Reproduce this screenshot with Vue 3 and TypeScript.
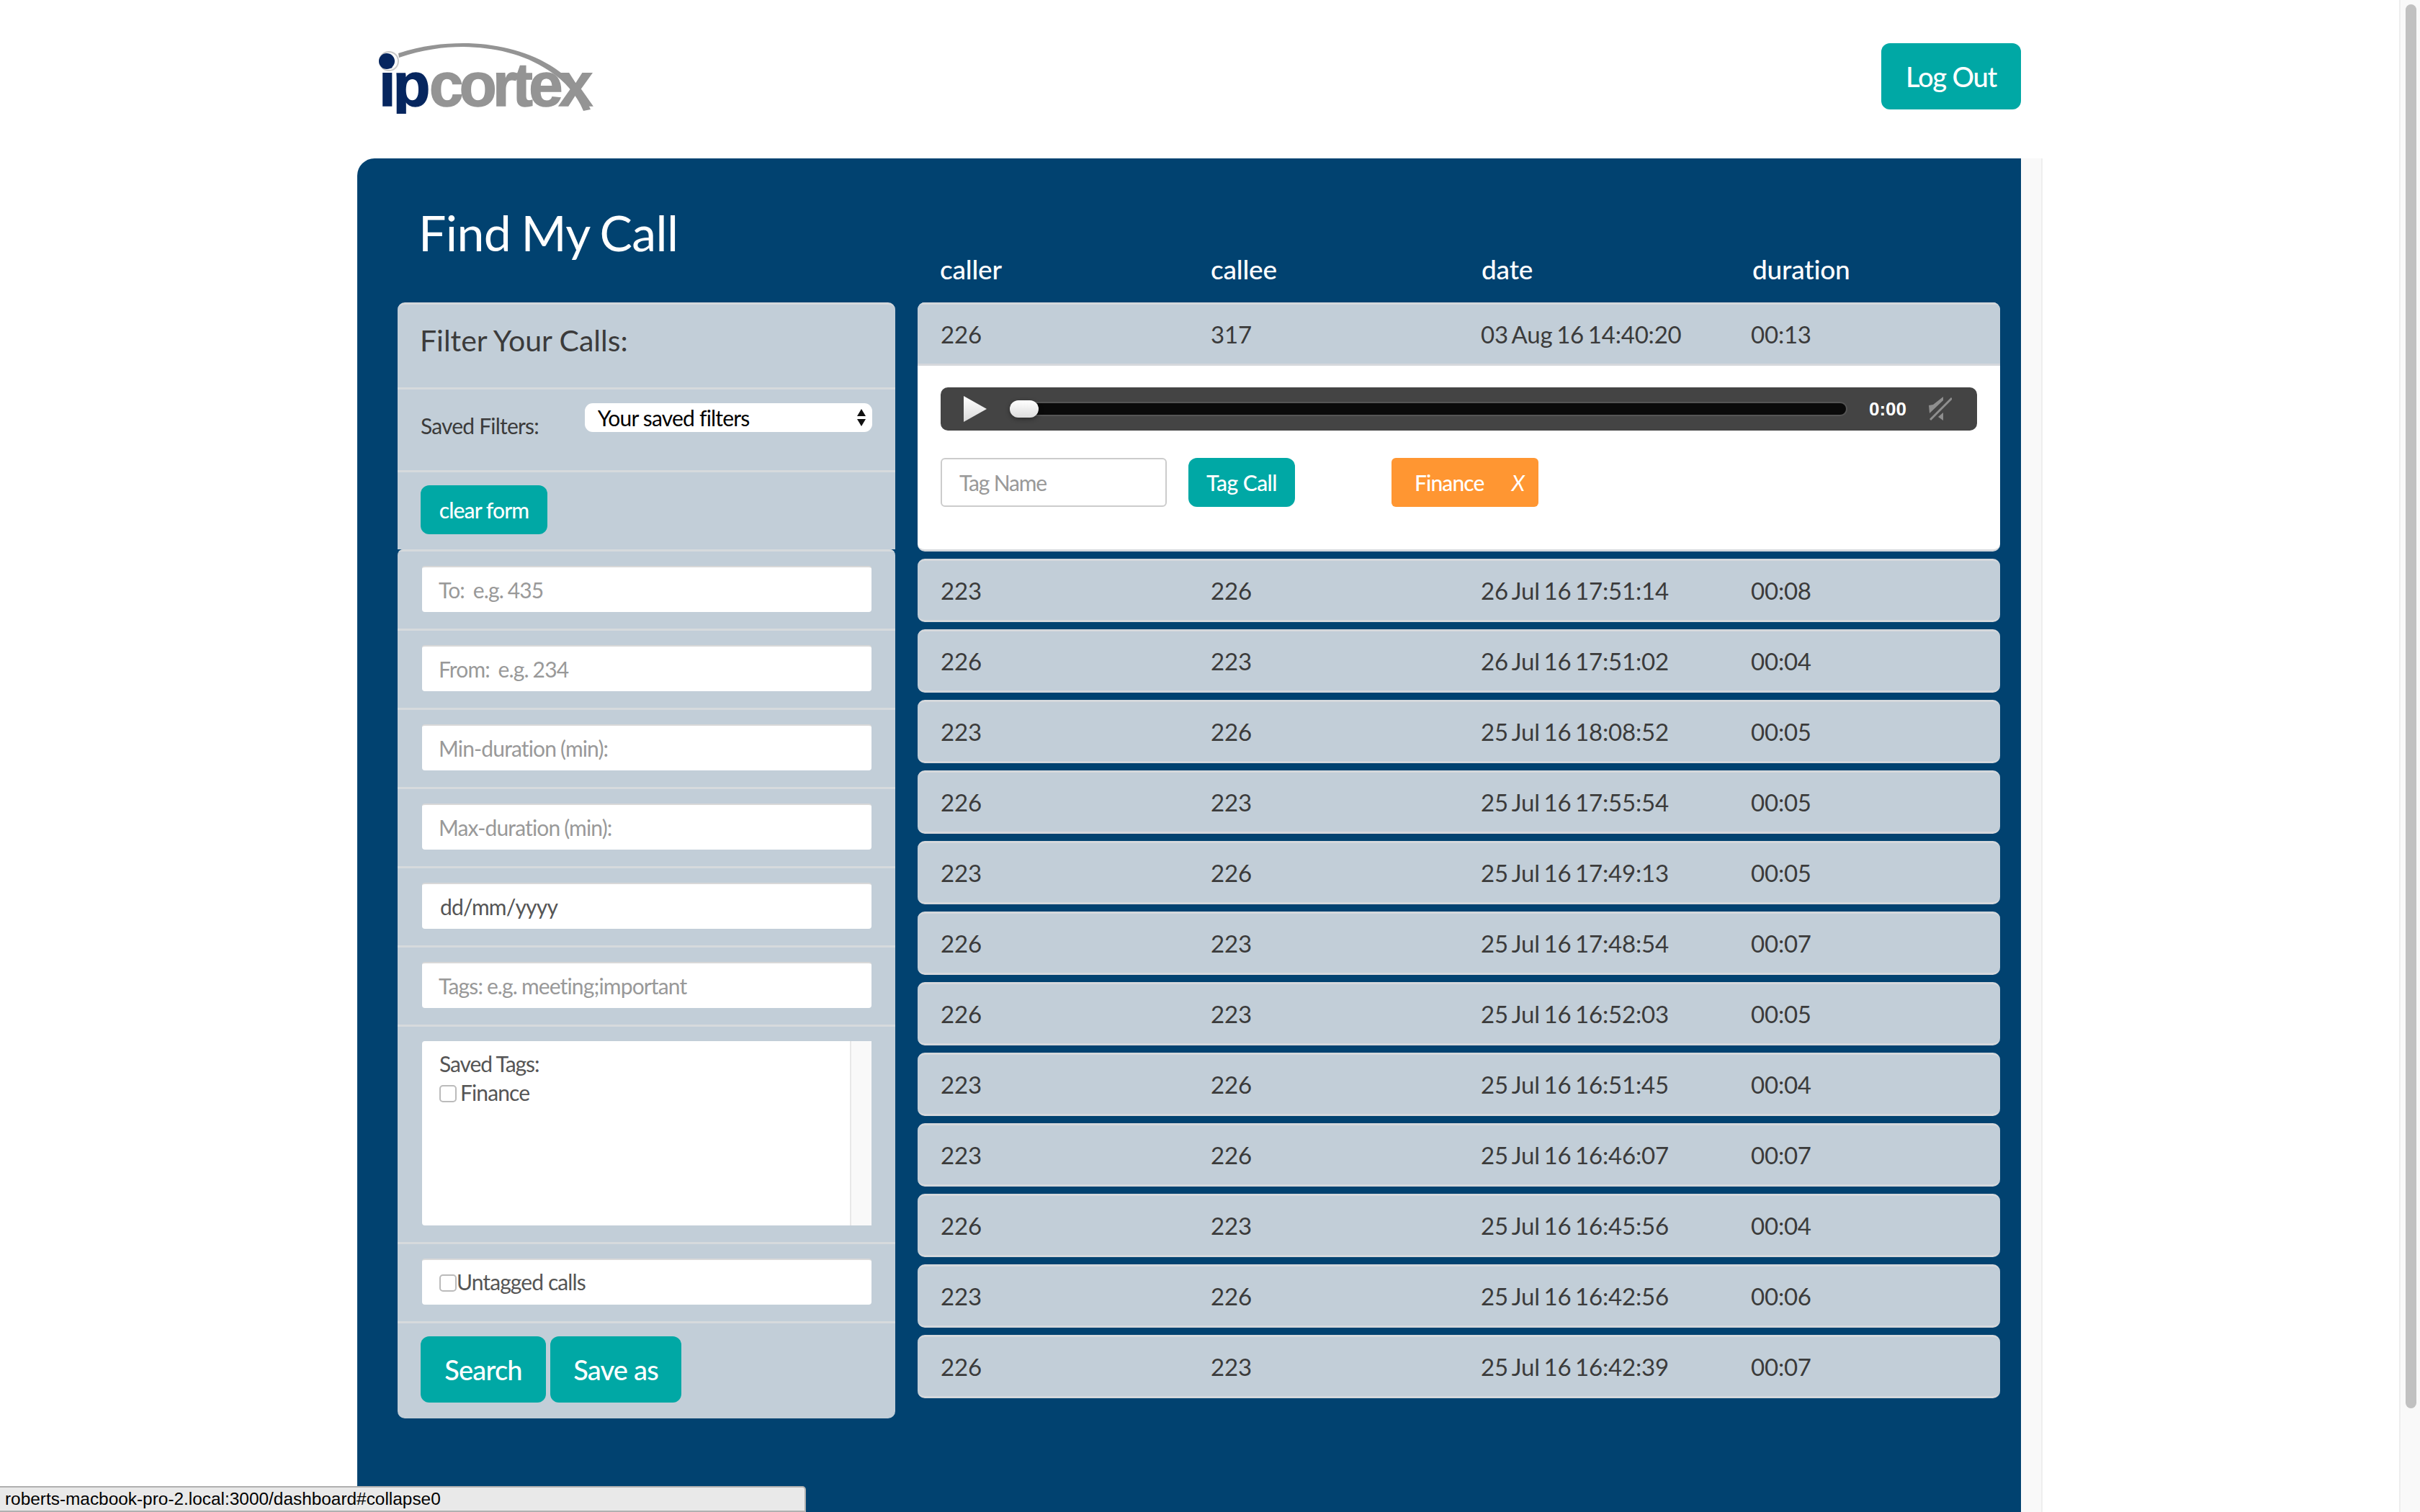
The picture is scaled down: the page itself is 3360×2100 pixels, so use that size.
<template>
  <div class="page">
    <div class="content">
      <header class="topbar">
        <svg class="logo" viewBox="0 0 294 100" role="img" aria-label="ipcortex logo">
          <defs>
            <clipPath id="logoClip"><rect x="0" y="0" width="300" height="98" /></clipPath>
          </defs>
          <path d="M27 14 C60 3 90 0 117 0 C160 0 205 10 240 32 C265 48 285 70 294 92 L284 94 C275 72 258 52 236 38 C200 14 160 6 117 5 C90 5 60 9 28 20 Z" fill="#949494" />
          <circle cx="14" cy="25" r="13" fill="none" stroke="#c9c9c9" stroke-width="2" />
          <g clip-path="url(#logoClip)">
            <text x="0" y="87" class="logo-ip">ip</text>
          </g>
          <circle cx="11" cy="25" r="11" fill="#06265f" />
          <text x="70" y="87" class="logo-rest">cortex</text>
        </svg>
        <button class="btn btn-logout" type="button">Log Out</button>
      </header>

      <div class="panel-wrap">
        <main class="panel">
          <h1 class="title">Find My Call</h1>
          <div class="columns">
            <aside class="filters">
              <div class="filter-group group-top">
                <div class="filter-row filter-head">Filter Your Calls:</div>
                <div class="filter-row filter-saved">
                  <label class="saved-label">Saved Filters:</label>
                  <div class="select-wrap">
                    <select class="saved-select">
                      <option>Your saved filters</option>
                    </select>
                    <svg class="select-arrows" viewBox="0 0 12 24">
                      <path d="M6 0 L12 10 H0 Z M0 14 H12 L6 24 Z" fill="#111" />
                    </svg>
                  </div>
                </div>
                <div class="filter-row filter-clear">
                  <button class="btn btn-clear" type="button">clear form</button>
                </div>
              </div>
              <div class="filter-group group-bottom">
                <div v-for="field in fields" :key="field" class="filter-row filter-field">
                  <input class="field" type="text" :placeholder="field" />
                </div>
                <div class="filter-row filter-field">
                  <input class="field field-date" type="text" value="dd/mm/yyyy" />
                </div>
                <div class="filter-row filter-field">
                  <input class="field" type="text" placeholder="Tags: e.g. meeting;important" />
                </div>
                <div class="filter-row filter-tags">
                  <div class="tags-box">
                    <div class="tags-list">
                      <div class="tags-title">Saved Tags:</div>
                      <label class="check-line check-finance"><input type="checkbox" class="check" />Finance</label>
                    </div>
                    <div class="tags-scroll"></div>
                  </div>
                </div>
                <div class="filter-row filter-untagged">
                  <label class="check-line untagged"><input type="checkbox" class="check" />Untagged calls</label>
                </div>
                <div class="filter-row filter-actions">
                  <button class="btn btn-big btn-search" type="button">Search</button>
                  <button class="btn btn-big btn-save" type="button">Save as</button>
                </div>
              </div>
            </aside>

            <section class="calls">
              <div class="calls-head">
                <span>caller</span>
                <span>callee</span>
                <span>date</span>
                <span>duration</span>
              </div>
              <div class="call-card">
                <div class="call-row open">
                  <span>226</span><span>317</span><span>03 Aug 16 14:40:20</span><span>00:13</span>
                </div>
                <div class="call-body">
                  <div class="player">
                    <svg class="play" viewBox="0 0 32 36">
                      <defs>
                        <linearGradient id="playFill" x1="0" y1="0" x2="0" y2="1">
                          <stop offset="0" stop-color="#fff" />
                          <stop offset="1" stop-color="#d9d9d9" />
                        </linearGradient>
                      </defs>
                      <path d="M0 0 L32 18 L0 36 Z" fill="url(#playFill)" />
                    </svg>
                    <div class="track"><div class="thumb"></div></div>
                    <span class="time">0:00</span>
                    <svg class="mute" viewBox="0 0 32 34">
                      <path d="M0 12 L6 11 L20 0 V5 L1 23 Z" fill="#8e8e8e" />
                      <path d="M2 32 L32 2" stroke="#8e8e8e" stroke-width="3" fill="none" />
                      <path d="M13 28 L20 22 V33 Z" fill="#8e8e8e" />
                    </svg>
                  </div>
                  <div class="tag-line">
                    <input class="tag-input" type="text" placeholder="Tag Name" />
                    <button class="btn btn-tag" type="button">Tag Call</button>
                    <span class="tag-chip">Finance<em class="tag-x">X</em></span>
                  </div>
                </div>
              </div>
              <div v-for="(call, i) in calls" :key="i" class="call-row">
                <span>{{ call[0] }}</span><span>{{ call[1] }}</span><span>{{ call[2] }}</span><span>{{ call[3] }}</span>
              </div>
            </section>
          </div>
        </main>
        <div class="panel-strip"></div>
      </div>
    </div>
    <div class="page-scroll"><div class="page-thumb"></div></div>
    <div class="status">roberts-macbook-pro-2.local:3000/dashboard#collapse0</div>
  </div>
</template>

<script setup lang="ts">
const fields: string[] = [
  'To:  e.g. 435',
  'From:  e.g. 234',
  'Min-duration (min):',
  'Max-duration (min):',
]

const calls: string[][] = [
  ['223', '226', '26 Jul 16 17:51:14', '00:08'],
  ['226', '223', '26 Jul 16 17:51:02', '00:04'],
  ['223', '226', '25 Jul 16 18:08:52', '00:05'],
  ['226', '223', '25 Jul 16 17:55:54', '00:05'],
  ['223', '226', '25 Jul 16 17:49:13', '00:05'],
  ['226', '223', '25 Jul 16 17:48:54', '00:07'],
  ['226', '223', '25 Jul 16 16:52:03', '00:05'],
  ['223', '226', '25 Jul 16 16:51:45', '00:04'],
  ['223', '226', '25 Jul 16 16:46:07', '00:07'],
  ['226', '223', '25 Jul 16 16:45:56', '00:04'],
  ['223', '226', '25 Jul 16 16:42:56', '00:06'],
  ['226', '223', '25 Jul 16 16:42:39', '00:07'],
]
</script>

<style>
html,
body {
  margin: 0;
  background: #fff;
  overflow: hidden;
}
</style>

<style scoped>
.page {
  position: relative;
  display: flex;
  height: 2100px;
  overflow: hidden;
  font-family: Lato, "Open Sans", sans-serif;
  color: #333;
}

.content {
  flex: 1;
  padding-left: 496px;
}

.topbar {
  display: flex;
  justify-content: space-between;
  width: 2310px;
  height: 220px;
  padding: 60px 0 0 30px;
  box-sizing: border-box;
  align-items: flex-start;
}

.logo {
  width: 294px;
  height: 100px;
  overflow: visible;
}

.logo-ip {
  font: bold 85px "Liberation Sans", sans-serif;
  letter-spacing: -4px;
  fill: #06265f;
  stroke: #06265f;
  stroke-width: 1.5px;
}

.logo-rest {
  font: bold 85px "Liberation Sans", sans-serif;
  letter-spacing: -5.6px;
  fill: #949494;
  stroke: #949494;
  stroke-width: 1.5px;
}

.btn {
  border: 0;
  background: #00a8a5;
  color: #fff;
  font-family: Lato, sans-serif;
  font-weight: 500;
  border-radius: 12px;
  padding: 0;
}

.btn-logout {
  width: 194px;
  height: 92px;
  font-size: 38px;
  letter-spacing: -1.2px;
}

.panel-wrap {
  display: flex;
  width: 2340px;
}

.panel {
  width: 2310px;
  height: 1880px;
  box-sizing: border-box;
  padding: 0 29px 0 56px;
  background: #014270;
  border-radius: 24px 0 0 0;
}

.panel-strip {
  width: 29px;
  background: #f9f9f9;
  border-right: 2px solid #eee;
}

.title {
  margin: 0;
  height: 200px;
  padding: 60px 0 0 29px;
  box-sizing: border-box;
  color: #fff;
  font-size: 68px;
  font-weight: 400;
  line-height: 86px;
  letter-spacing: -0.6px;
  word-spacing: -2.5px;
}

.columns {
  display: flex;
  gap: 31px;
  align-items: flex-start;
}

.filters {
  width: 691px;
  flex: none;
}

.filter-group {
  background: #c2ced8;
  overflow: hidden;
}

.group-top {
  border-radius: 10px 10px 0 0;
  border-top: 3px solid #d5d8dc;
}

.group-bottom {
  border-radius: 8px 8px 10px 10px;
}

.filter-row {
  box-sizing: border-box;
  padding: 0 32px;
  border-top: 3px solid #d6dadd;
}

.group-top .filter-row:first-child {
  border-top: 0;
}

.filter-head {
  height: 115px;
  padding-top: 24px;
  font-size: 41px;
  line-height: 52px;
  color: #3b3b3b;
  padding-left: 31px;
}

.filter-saved {
  height: 115px;
  display: flex;
  padding-top: 19px;
  align-items: flex-start;
}

.saved-label {
  width: 228px;
  padding-top: 11px;
  font-size: 30px;
  line-height: 40px;
  color: #3b3b3b;
  letter-spacing: -0.8px;
}

.select-wrap {
  position: relative;
  width: 400px;
  height: 40px;
}

.saved-select {
  appearance: none;
  width: 100%;
  height: 40px;
  border: 0;
  border-radius: 11px;
  padding: 0 0 0 18px;
  background: #fff;
  font-family: Lato, sans-serif;
  font-size: 30px;
  letter-spacing: -0.8px;
  color: #000;
}

.select-arrows {
  position: absolute;
  right: 9px;
  top: 8px;
  width: 12px;
  height: 24px;
}

.filter-clear {
  height: 110px;
  padding-top: 18px;
}

.btn-clear {
  width: 176px;
  height: 68px;
  font-size: 30px;
  letter-spacing: -0.9px;
}

.filter-field {
  height: 110px;
  padding-top: 20px;
  padding-left: 34px;
}

.field {
  display: block;
  width: 624px;
  height: 64px;
  box-sizing: border-box;
  border: 0;
  border-top: 2px solid #d8d8d8;
  border-radius: 4px;
  padding: 0 24px 0 23px;
  background: #fff;
  font-family: Lato, sans-serif;
  font-size: 30px;
  letter-spacing: -0.85px;
  word-spacing: -1px;
  color: #555;
  outline: none;
}

.field-date {
  padding-left: 25px;
  letter-spacing: -0.8px;
}

.field::placeholder {
  color: #999;
  opacity: 1;
  white-space: pre;
}

.filter-tags {
  height: 302px;
  padding-top: 20px;
  padding-left: 34px;
}

.tags-box {
  display: flex;
  width: 624px;
  height: 256px;
  border-radius: 4px 0 0 4px;
  background: #fff;
  overflow: hidden;
}

.tags-list {
  flex: 1;
  padding: 11px 24px;
  font-size: 30px;
  line-height: 40px;
  color: #555;
  letter-spacing: -1.1px;
}

.tags-scroll {
  width: 28px;
  background: #f9f9f9;
  border-left: 2px solid #e8e8e8;
}

.check-line {
  display: flex;
  align-items: center;
  font-size: 30px;
  color: #555;
  letter-spacing: -0.9px;
}

.check {
  appearance: none;
  width: 24px;
  height: 24px;
  margin: 4px 0 0;
  box-sizing: border-box;
  border: 2px solid #bbb;
  border-radius: 5px;
  background: #fff;
}

.check-finance .check {
  margin-right: 5px;
}

.filter-untagged {
  height: 110px;
  padding-top: 20px;
  padding-left: 34px;
}

.untagged {
  width: 624px;
  height: 64px;
  box-sizing: border-box;
  padding: 0 24px 3px;
  border-top: 2px solid #d8d8d8;
  border-radius: 4px;
  background: #fff;
}

.filter-actions {
  display: flex;
  gap: 6px;
  height: 135px;
  padding-top: 18px;
}

.btn-big {
  height: 92px;
  font-size: 38px;
  letter-spacing: -0.8px;
}

.btn-search {
  width: 174px;
}

.btn-save {
  width: 182px;
}

.calls {
  width: 1503px;
  margin-top: -72px;
}

.calls-head {
  display: grid;
  grid-template-columns: 376px 376px 376px 1fr;
  height: 72px;
  padding: 4px 0 0 31px;
  box-sizing: border-box;
  color: #fff;
  font-size: 37px;
  font-weight: 500;
  line-height: 44px;
  letter-spacing: -0.2px;
}

.call-card {
  margin-bottom: 10px;
  border-radius: 10px;
  overflow: hidden;
  background: #fff;
  border-bottom: 3px solid #d5d8dc;
}

.call-row {
  display: grid;
  grid-template-columns: 375px 375px 375px 1fr;
  height: 88px;
  box-sizing: border-box;
  margin-bottom: 10px;
  padding: 0 0 0 32px;
  align-items: center;
  background: #c2ced8;
  border-top: 3px solid #d5d8dc;
  border-bottom: 3px solid #d5d8dc;
  border-radius: 10px;
  font-size: 33px;
  letter-spacing: -0.2px;
  word-spacing: -2.5px;
  color: #3b3b3b;
}

.call-row.open {
  margin: 0;
  border-radius: 0;
}

.call-body {
  height: 255px;
  box-sizing: border-box;
  padding: 30px 32px 0;
}

.player {
  display: flex;
  align-items: center;
  height: 60px;
  border-radius: 10px;
  background: #444;
}

.play {
  width: 32px;
  height: 36px;
  margin-left: 32px;
}

.track {
  position: relative;
  width: 1159px;
  height: 16px;
  margin-left: 34px;
  border-radius: 8px;
  background: #0a0a0a;
  box-shadow: 0 0 0 2px #555;
}

.thumb {
  position: absolute;
  left: -2px;
  top: -4px;
  width: 40px;
  height: 24px;
  border-radius: 12px;
  background: linear-gradient(#fff, #dcdcdc);
  box-shadow: 0 2px 6px rgba(0, 0, 0, 0.4);
}

.time {
  margin-left: 32px;
  color: #fff;
  font-family: "Liberation Sans", sans-serif;
  font-size: 26px;
  font-weight: 700;
}

.mute {
  width: 32px;
  height: 34px;
  margin-left: 31px;
}

.tag-line {
  display: flex;
  align-items: flex-start;
  margin-top: 38px;
}

.tag-input {
  width: 314px;
  height: 68px;
  box-sizing: border-box;
  border: 2px solid #ccc;
  border-radius: 6px;
  padding: 0 24px;
  background: #fff;
  font-family: Lato, sans-serif;
  font-size: 30px;
  letter-spacing: -1.2px;
  outline: none;
}

.tag-input::placeholder {
  color: #999;
  opacity: 1;
}

.btn-tag {
  width: 148px;
  height: 68px;
  margin-left: 30px;
  font-size: 30px;
  letter-spacing: -0.5px;
}

.tag-chip {
  display: flex;
  align-items: center;
  justify-content: space-between;
  width: 204px;
  height: 68px;
  box-sizing: border-box;
  margin-left: 134px;
  padding: 0 20px 0 32px;
  border-radius: 6px;
  background: #ff9632;
  color: #fff;
  font-size: 30px;
  font-weight: 500;
  letter-spacing: -0.9px;
}

.tag-x {
  font-style: italic;
  font-weight: 400;
}

.page-scroll {
  width: 29px;
  flex: none;
  box-sizing: border-box;
  padding: 6px 5px 0 7px;
  background: #f9f9f9;
  border-left: 2px solid #eee;
}

.page-thumb {
  height: 1950px;
  border-radius: 9px;
  background: #c1c1c1;
}

.status {
  position: absolute;
  left: 0;
  bottom: 0;
  width: 1119px;
  height: 36px;
  box-sizing: border-box;
  padding-left: 7px;
  background: #e9e9e9;
  border: 2px solid #b0b0b0;
  border-left: 0;
  border-radius: 0 5px 0 0;
  color: #000;
  font-family: "Liberation Sans", sans-serif;
  font-size: 24.4px;
  line-height: 32px;
}
</style>
